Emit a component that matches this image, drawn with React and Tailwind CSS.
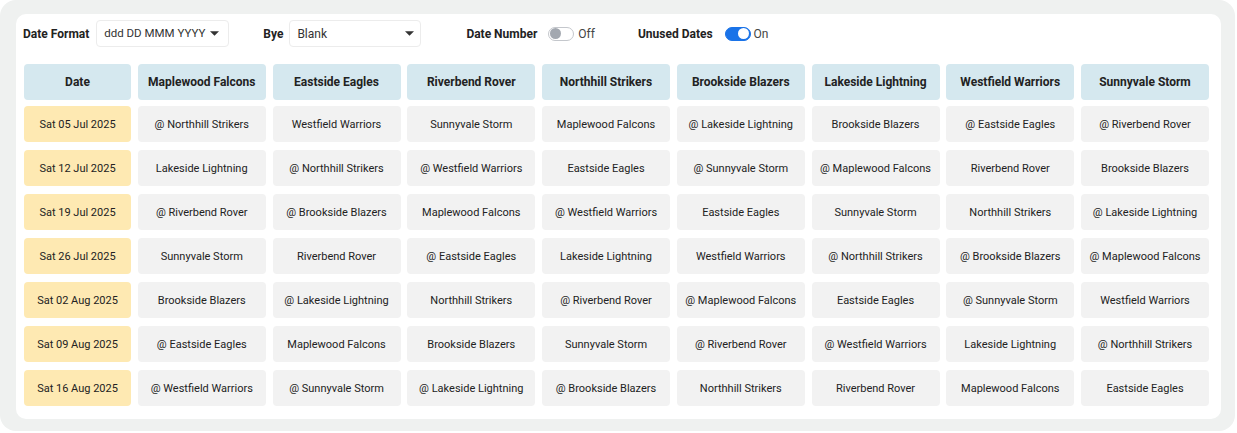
import React from 'react';

const teams = [
  'Maplewood Falcons',
  'Eastside Eagles',
  'Riverbend Rover',
  'Northhill Strikers',
  'Brookside Blazers',
  'Lakeside Lightning',
  'Westfield Warriors',
  'Sunnyvale Storm',
];

const rows = [
  ['Sat 05 Jul 2025', '@ Northhill Strikers', 'Westfield Warriors', 'Sunnyvale Storm', 'Maplewood Falcons', '@ Lakeside Lightning', 'Brookside Blazers', '@ Eastside Eagles', '@ Riverbend Rover'],
  ['Sat 12 Jul 2025', 'Lakeside Lightning', '@ Northhill Strikers', '@ Westfield Warriors', 'Eastside Eagles', '@ Sunnyvale Storm', '@ Maplewood Falcons', 'Riverbend Rover', 'Brookside Blazers'],
  ['Sat 19 Jul 2025', '@ Riverbend Rover', '@ Brookside Blazers', 'Maplewood Falcons', '@ Westfield Warriors', 'Eastside Eagles', 'Sunnyvale Storm', 'Northhill Strikers', '@ Lakeside Lightning'],
  ['Sat 26 Jul 2025', 'Sunnyvale Storm', 'Riverbend Rover', '@ Eastside Eagles', 'Lakeside Lightning', 'Westfield Warriors', '@ Northhill Strikers', '@ Brookside Blazers', '@ Maplewood Falcons'],
  ['Sat 02 Aug 2025', 'Brookside Blazers', '@ Lakeside Lightning', 'Northhill Strikers', '@ Riverbend Rover', '@ Maplewood Falcons', 'Eastside Eagles', '@ Sunnyvale Storm', 'Westfield Warriors'],
  ['Sat 09 Aug 2025', '@ Eastside Eagles', 'Maplewood Falcons', 'Brookside Blazers', 'Sunnyvale Storm', '@ Riverbend Rover', '@ Westfield Warriors', 'Lakeside Lightning', '@ Northhill Strikers'],
  ['Sat 16 Aug 2025', '@ Westfield Warriors', '@ Sunnyvale Storm', '@ Lakeside Lightning', '@ Brookside Blazers', 'Northhill Strikers', 'Riverbend Rover', 'Maplewood Falcons', 'Eastside Eagles'],
];

const Caret = () => (
  <svg className="h-[5px] w-[9px] shrink-0 text-[#333]" viewBox="0 0 10 5" fill="currentColor">
    <path d="M0 0h10L5 5z" />
  </svg>
);

const Toggle = ({ on }) => (
  <div
    className={`flex h-[14px] w-[26px] items-center rounded-full border px-[1px] ${
      on ? 'justify-end border-[#1a73e8] bg-[#1a73e8]' : 'justify-start border-[#c4c7cc] bg-white'
    }`}
  >
    <div className={`h-[11px] w-[11px] rounded-full ${on ? 'bg-white' : 'bg-[#a3a8b0]'}`} />
  </div>
);

const App = () => {
  return (
    <div className="min-h-screen bg-white font-['Roboto',sans-serif] text-[#222]">
      <div className="h-[431px] w-[1235px] rounded-2xl bg-[#eff1f0] px-4 pt-[14px]">
        <div className="h-[405px] w-[1205px] rounded-[10px] bg-white pl-2 pt-[6px]">
          {/* Controls */}
          <div className="flex h-[27px] items-center whitespace-nowrap text-[12px]">
            <span className="ml-[-1px] font-bold text-[#222]">Date Format</span>
            <div className="ml-[7px] flex h-[27px] w-[133px] items-center justify-between rounded border border-[#ececec] pl-[7px] pr-[9px] text-[11.5px] text-[#333]">
              <span>ddd DD MMM YYYY</span>
              <Caret />
            </div>
            <span className="ml-[34px] font-bold text-[#222]">Bye</span>
            <div className="ml-[6px] flex h-[27px] w-[132px] items-center justify-between rounded border border-[#ececec] pl-[7px] pr-[6px] text-[12px] text-[#333]">
              <span>Blank</span>
              <Caret />
            </div>
            <span className="ml-[45px] font-bold text-[#222]">Date Number</span>
            <div className="ml-[11px]">
              <Toggle on={false} />
            </div>
            <span className="ml-[4px] text-[12px] text-[#444]">Off</span>
            <span className="ml-[43px] font-bold text-[#222]">Unused Dates</span>
            <div className="ml-[12px]">
              <Toggle on />
            </div>
            <span className="ml-[3px] text-[12px] text-[#444]">On</span>
          </div>

          {/* Schedule grid */}
          <div className="mt-[17px] grid w-[1185px] grid-cols-[107px_repeat(8,128px)] gap-x-[6.75px] gap-y-2">
            <div className="flex h-[36px] items-center justify-center rounded bg-[#d5e8ef] text-[12px] font-bold text-[#222]">
              Date
            </div>
            {teams.map((t) => (
              <div
                key={t}
                className="flex h-[36px] items-center justify-center rounded bg-[#d5e8ef] text-[12px] font-bold text-[#222]"
              >
                {t}
              </div>
            ))}
            {rows.map((r, ri) =>
              r.map((cell, ci) => (
                <div
                  key={`${ri}-${ci}`}
                  className={`flex h-[36px] items-center justify-center rounded pt-[2px] text-[11px] text-[#222] ${
                    ci === 0 ? 'bg-[#fee9b2]' : 'bg-[#f2f2f2]'
                  } ${ri === 0 ? 'mt-[-2px]' : ''}`}
                >
                  {cell}
                </div>
              ))
            )}
          </div>
        </div>
      </div>
    </div>
  );
};

export default App;
